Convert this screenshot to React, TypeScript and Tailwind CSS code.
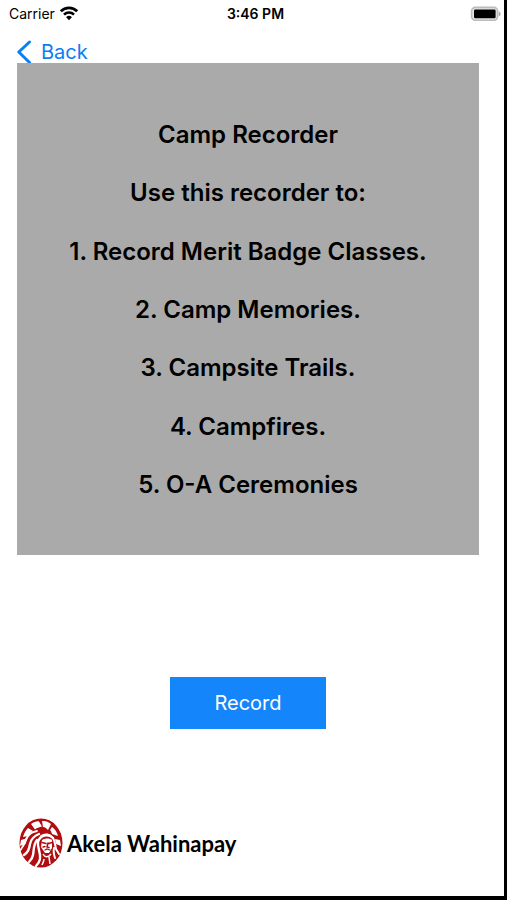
const lines = [
  'Camp Recorder',
  'Use this recorder to:',
  '1. Record Merit Badge Classes.',
  '2. Camp Memories.',
  '3. Campsite Trails.',
  '4. Campfires.',
  '5. O-A Ceremonies',
];

function WifiIcon() {
  return (
    <svg className="h-4 w-5" viewBox="0 0 20 16" fill="none" stroke="#000" aria-hidden="true">
      <path d="M1.8 5.2a11.6 11.6 0 0 1 16.4 0" strokeWidth="2.8" />
      <path d="M5 8.6a7 7 0 0 1 10 0" strokeWidth="2.6" />
      <path d="M10 14.2 7.1 11.2a4.1 4.1 0 0 1 5.8 0z" fill="#000" stroke="none" />
    </svg>
  );
}

function BatteryIcon() {
  return (
    <svg className="h-4 w-8" viewBox="0 0 32 16" aria-hidden="true">
      <rect x="1.6" y="1.4" width="26" height="12.8" rx="3.6" fill="#e6e6e6" stroke="#bbb" strokeWidth="1.6" />
      <rect x="4" y="3.6" width="21.6" height="8.6" rx="1.2" fill="#000" />
      <path d="M28.8 5.4c2.4.6 2.4 4.2 0 4.8z" fill="#aaa" />
    </svg>
  );
}

function ChiefLogo() {
  return (
    <svg className="h-[50px] w-11" viewBox="0 0 44 50" fill="none" aria-hidden="true">
      <ellipse cx="22" cy="25" rx="21.5" ry="24.5" fill="#b10c0f" />
      <g fill="#fff">
        <path d="M12 6c3-2 6-3 8-2.500l3 5c-3 1-5 1-7 3z" />
        <path d="M23 3c4-.5 7 1 9 3l-3 6c-2-2-3-3-5-3z" />
        <path d="M33 9c3 2 5 5 6 9l-6-2c-.5-2-1-3-2-4z" />
        <path d="M9 10l5 3c-2 1-4 3-5 5L4 19c1-4 3-7 5-9z" />
        <path d="M2 22l7-2-3 6-5 2z" />
        <path d="M36 21l5 1 1 6-5-2z" />
      </g>
      <g stroke="#fff" strokeLinecap="round">
        <path d="M18 13c-7 1-11 6-12 12L1.500 32" strokeWidth="1.8" />
        <path d="M20 16c-5 2-8 5-9 10-1 6-2 8-6 11" strokeWidth="2.4" />
        <path d="M18 22c-4 5-3 11-4 15-.5 3-2 5-4 7" strokeWidth="2.4" />
        <path d="M34 20c-5-5-13-3-15 4-1 6 3 10 2 17-.5 3-2 5-4 7" strokeWidth="2.4" />
        <path d="M34 20c2 3 2 7 3 11l3 5M35 30c-1 4 0 7 1 10" strokeWidth="2" />
        <path d="M22 18c4-3 9-2 12 2" strokeWidth="1.6" />
      </g>
      <path d="M23 22c3-2 8-2 10 0v8l-3 5h-4l-4-6z" fill="#fff" />
      <g stroke="#b10c0f" strokeLinecap="round">
        <path d="M23 24.500l4 1M30 25.500l3-1M29 25l-1 4 2 .5" strokeWidth="1.5" />
        <path d="M24 29l2-.5M26 32l2-1 3 1" strokeWidth="1.3" />
      </g>
      <path d="M24 36c2 4 6 3 8 0M25 41c0 2-1 4-2 6M30 39l1 7" stroke="#fff" strokeWidth="1.5" />
    </svg>
  );
}

export default function App() {
  return (
    <div className="flex min-h-screen flex-col border-r-[3px] border-b-4 border-black bg-white font-['Inter','Liberation_Sans',sans-serif] text-black">
      <header className="grid h-7 grid-cols-3 items-center pr-[2px] pl-[9px] text-sm">
        <div className="flex items-center gap-1">
          <span>Carrier</span>
          <WifiIcon />
        </div>
        <time className="text-center font-semibold">3:46 PM</time>
        <div className="flex justify-end">
          <BatteryIcon />
        </div>
      </header>

      <main className="flex grow flex-col pr-[25px] pl-[17px]">
        <nav className="flex h-9 items-end">
          <button type="button" className="flex h-6 items-center gap-2 text-xl leading-6 text-[#087ff5]">
            <svg className="h-6 w-4" viewBox="0 0 16 24" fill="none" stroke="currentColor" strokeWidth="3" aria-hidden="true">
              <path d="M12.500 2 1.800 12l10.700 10.500" strokeLinecap="round" strokeLinejoin="round" />
            </svg>
            <span>Back</span>
          </button>
        </nav>

        <section className="-mt-px flex h-[492px] flex-col items-center justify-between bg-[#aaa] pt-[56px] pb-[54px] text-2xl font-semibold">
          {lines.map((line) => (
            <p key={line}>{line}</p>
          ))}
        </section>

        <button type="button" className="mt-[122px] h-[52px] w-[156px] self-center bg-[#1485fa] text-xl text-white">
          Record
        </button>

        <footer className="mt-auto flex items-center gap-1 pb-7 pl-[2px]">
          <ChiefLogo />
          <span className="font-['Lato','Liberation_Sans',sans-serif] text-[22px] font-bold">Akela Wahinapay</span>
        </footer>
      </main>
    </div>
  );
}
